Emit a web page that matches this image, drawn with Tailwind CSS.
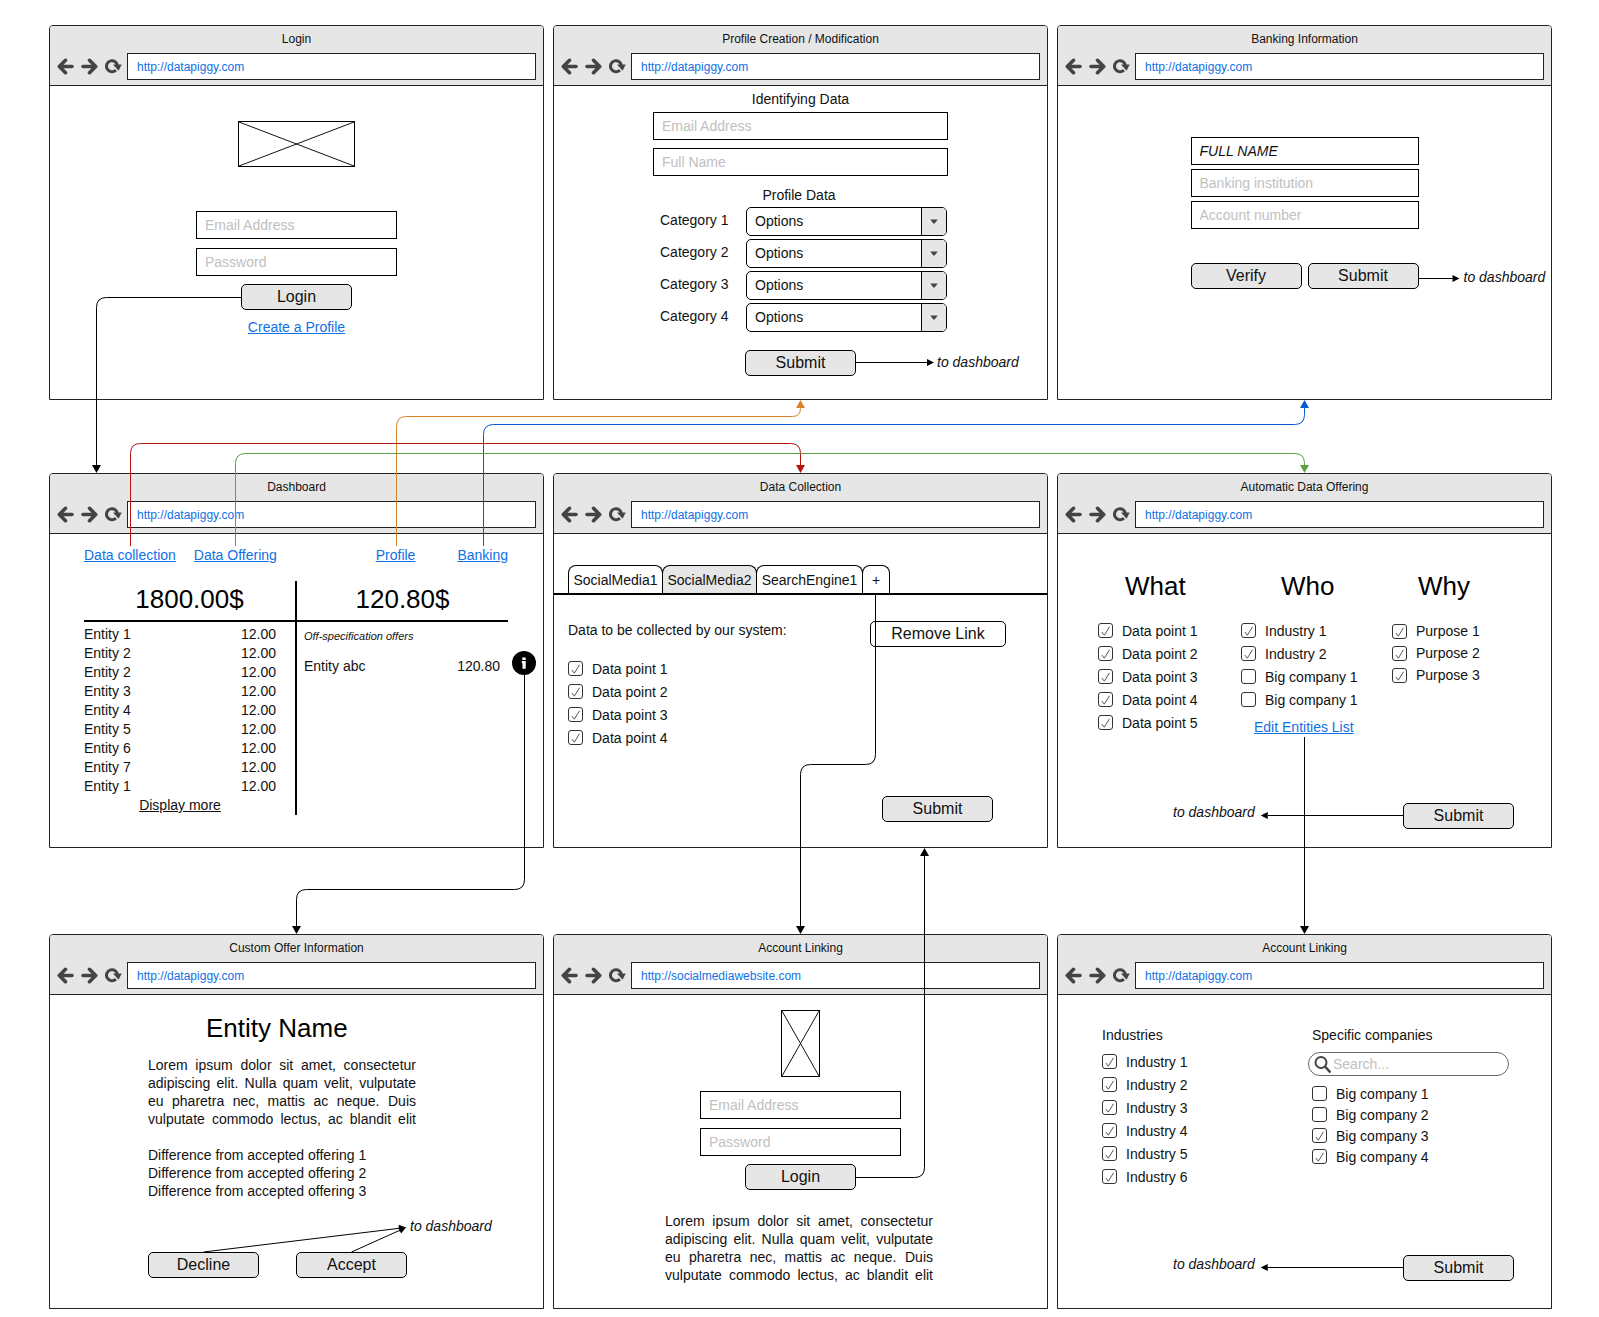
<!DOCTYPE html>
<html lang="en">
<head>
<meta charset="utf-8">
<meta name="viewport" content="width=device-width, initial-scale=1">
<title>Data Piggy wireframes</title>
<script src="https://cdn.jsdelivr.net/npm/@tailwindcss/browser@4"></script>
</head>
<body class="bg-white font-['Liberation_Sans',Arial,sans-serif] text-[14px] leading-[18px] text-[#111]">

<!-- Shared icons -->
<svg class="hidden" aria-hidden="true">
  <symbol id="back" viewBox="0 0 17 17"><path d="M8.5 2.3 2.3 8.5l6.2 6.2M3 8.5h12" fill="none" stroke="#444" stroke-width="3.6" stroke-linecap="round" stroke-linejoin="round"/></symbol>
  <symbol id="forward" viewBox="0 0 17 17"><path d="M8.5 2.3l6.2 6.2-6.2 6.2M14 8.5H2" fill="none" stroke="#444" stroke-width="3.6" stroke-linecap="round" stroke-linejoin="round"/></symbol>
  <symbol id="reload" viewBox="0 0 17 17"><path d="M12.5 8.2A5.5 5.5 0 1 0 10.9 12.1" fill="none" stroke="#444" stroke-width="3"/><path d="M8 6.4h8.7L13.6 12.8z" fill="#444"/></symbol>
  <symbol id="check" viewBox="0 0 15 15"><path d="M3.8 9l2.5 3.2L11.5 3.8" fill="none" stroke="#555"/></symbol>
  <symbol id="caret" viewBox="0 0 8 5"><path d="M.3.5h7.4L4.6 4.4H3.4z" fill="#444"/></symbol>
</svg>

<main class="relative grid min-w-[1500px] grid-cols-3 gap-x-[9px] pt-[25px] pr-[47px] pb-[8px] pl-[49px]
  [&_section]:min-h-[375px] [&_section]:rounded-t-[4px] [&_section]:border [&_section]:border-[#222]
  [&_header]:border-b [&_header]:border-[#222] [&_header]:bg-[#e6e6e6] [&_header]:rounded-t-[3px] [&_header]:pb-[5px] [&_header]:text-[12px]
  [&_header_h2]:text-center [&_header_h2]:leading-[27px]
  [&_header_div]:flex [&_header_div]:items-center [&_header_div]:gap-[7px] [&_header_div]:px-[7px]
  [&_header_svg]:size-[17px]
  [&_[type=url]]:-ml-[2px] [&_[type=url]]:h-[27px] [&_[type=url]]:min-w-0 [&_[type=url]]:flex-1 [&_[type=url]]:border [&_[type=url]]:border-[#222] [&_[type=url]]:bg-white [&_[type=url]]:px-[9px] [&_[type=url]]:text-[#1071e5]
  [&_.field]:h-[28px] [&_.field]:w-full [&_.field]:border [&_.field]:border-black [&_.field]:px-[8px] [&_.field]:placeholder:text-[#c0c0c0]
  [&_.btn]:h-[26px] [&_.btn]:w-[111px] [&_.btn]:shrink-0 [&_.btn]:rounded-[5px] [&_.btn]:border [&_.btn]:border-black [&_.btn]:bg-[#e6e6e6] [&_.btn]:text-[16px] [&_.btn]:leading-[24px]
  [&_.link]:text-[#1071e5] [&_.link]:underline
  [&_.title]:text-[26px] [&_.title]:leading-[34px] [&_.title]:text-black
  [&_li]:flex [&_li]:items-center [&_label]:whitespace-nowrap
  [&_.box]:mr-[9px] [&_.box]:grid [&_.box]:size-[15px] [&_.box]:shrink-0
  [&_.box_input]:col-start-1 [&_.box_input]:row-start-1 [&_.box_input]:size-[15px] [&_.box_input]:appearance-none [&_.box_input]:rounded-[3px] [&_.box_input]:border [&_.box_input]:border-[#333]
  [&_.box_svg]:pointer-events-none [&_.box_svg]:col-start-1 [&_.box_svg]:row-start-1 [&_.box_svg]:hidden [&_.box_svg]:size-[15px]">

  <!-- Login -->
  <section>
    <header>
      <h2>Login</h2>
      <div><button aria-label="Back"><svg><use href="#back"/></svg></button><button aria-label="Forward"><svg><use href="#forward"/></svg></button><button aria-label="Reload"><svg><use href="#reload"/></svg></button><input type="url" aria-label="Address" value="http://datapiggy.com"></div>
    </header>
    <form class="flex flex-col items-center pt-[35px]">
      <svg class="h-[46px] w-[117px] border border-black" viewBox="0 0 115 44" preserveAspectRatio="none" role="img" aria-label="Logo"><path d="M0 0l115 44M115 0L0 44" stroke="#111"/></svg>
      <div class="mt-[44px] flex w-[201px] flex-col gap-[9px]">
        <input class="field" aria-label="Email Address" placeholder="Email Address">
        <input class="field" type="password" aria-label="Password" placeholder="Password">
      </div>
      <button type="button" id="login" class="btn mt-[8px]">Login</button>
      <a href="#profile" class="link mt-[8px]">Create a Profile</a>
    </form>
  </section>

  <!-- Profile -->
  <section id="profile">
    <header>
      <h2>Profile Creation / Modification</h2>
      <div><button aria-label="Back"><svg><use href="#back"/></svg></button><button aria-label="Forward"><svg><use href="#forward"/></svg></button><button aria-label="Reload"><svg><use href="#reload"/></svg></button><input type="url" aria-label="Address" value="http://datapiggy.com"></div>
    </header>
    <form class="flex flex-col items-center pt-[4px]">
      <h3>Identifying Data</h3>
      <div class="mt-[4px] flex w-[295px] flex-col gap-[8px]">
        <input class="field" aria-label="Email Address" placeholder="Email Address">
        <input class="field" aria-label="Full Name" placeholder="Full Name">
      </div>
      <h3 class="mt-[10px] pr-[3px]">Profile Data</h3>
      <div class="mt-[3px] grid w-[295px] grid-cols-[86px_201px] gap-y-[3px] pl-[7px]
        [&_label]:leading-[26px]
        [&_.pick]:grid [&_.pick]:h-[29px] [&_.pick]:grid-cols-[1fr_25px] [&_.pick]:overflow-hidden [&_.pick]:rounded-[5px] [&_.pick]:border [&_.pick]:border-black
        [&_select]:col-span-2 [&_select]:col-start-1 [&_select]:row-start-1 [&_select]:appearance-none [&_select]:px-[8px] [&_select]:pb-[2px]
        [&_.pick_span]:pointer-events-none [&_.pick_span]:col-start-2 [&_.pick_span]:row-start-1 [&_.pick_span]:grid [&_.pick_span]:place-items-center [&_.pick_span]:border-l [&_.pick_span]:border-black [&_.pick_span]:bg-[#e6e6e6]">
        <label for="c1">Category 1</label>
        <div class="pick"><select id="c1"><option>Options</option></select><span><svg class="h-[5px] w-[8px]"><use href="#caret"/></svg></span></div>
        <label for="c2">Category 2</label>
        <div class="pick"><select id="c2"><option>Options</option></select><span><svg class="h-[5px] w-[8px]"><use href="#caret"/></svg></span></div>
        <label for="c3">Category 3</label>
        <div class="pick"><select id="c3"><option>Options</option></select><span><svg class="h-[5px] w-[8px]"><use href="#caret"/></svg></span></div>
        <label for="c4">Category 4</label>
        <div class="pick"><select id="c4"><option>Options</option></select><span><svg class="h-[5px] w-[8px]"><use href="#caret"/></svg></span></div>
      </div>
      <div class="mt-[18px] grid w-full grid-cols-[1fr_auto_1fr] items-center">
        <button type="button" id="profile-submit" class="btn col-start-2">Submit</button>
        <p class="pb-[2px] pl-[81px] italic"><span id="profile-note">to dashboard</span></p>
      </div>
    </form>
  </section>

  <!-- Banking -->
  <section id="banking">
    <header>
      <h2>Banking Information</h2>
      <div><button aria-label="Back"><svg><use href="#back"/></svg></button><button aria-label="Forward"><svg><use href="#forward"/></svg></button><button aria-label="Reload"><svg><use href="#reload"/></svg></button><input type="url" aria-label="Address" value="http://datapiggy.com"></div>
    </header>
    <form class="flex flex-col items-center pt-[51px]">
      <div class="flex w-[228px] flex-col gap-[4px]">
        <input class="field italic" aria-label="Full name" value="FULL NAME">
        <input class="field" aria-label="Banking institution" placeholder="Banking institution">
        <input class="field" aria-label="Account number" placeholder="Account number">
      </div>
      <div class="mt-[34px] grid w-full grid-cols-[1fr_auto_1fr] items-center">
        <div class="col-start-2 flex gap-[6px]">
          <button type="button" class="btn">Verify</button>
          <button type="button" id="banking-submit" class="btn">Submit</button>
        </div>
        <p class="pt-[2px] pl-[45px] italic"><span id="banking-note">to dashboard</span></p>
      </div>
    </form>
  </section>

  <!-- Dashboard -->
  <section id="dashboard" class="mt-[73px]">
    <header>
      <h2>Dashboard</h2>
      <div><button aria-label="Back"><svg><use href="#back"/></svg></button><button aria-label="Forward"><svg><use href="#forward"/></svg></button><button aria-label="Reload"><svg><use href="#reload"/></svg></button><input type="url" aria-label="Address" value="http://datapiggy.com"></div>
    </header>
    <div class="pt-[12px] pr-[35px] pl-[34px]">
      <nav class="flex">
        <a id="nav-collection" href="#collection" class="link">Data collection</a>
        <a id="nav-offering" href="#offering" class="link ml-[18px]">Data Offering</a>
        <a id="nav-profile" href="#profile" class="link ml-auto">Profile</a>
        <a id="nav-banking" href="#banking" class="link ml-[42px]">Banking</a>
      </nav>
      <div class="mt-[17px] grid grid-cols-[1fr_2px_1fr]">
        <div>
          <h3 class="title border-b-2 border-black pt-px pb-[4px] text-center">1800.00$</h3>
          <div class="pt-[3px] pr-[19px] text-center leading-[19px]">
            <table class="w-full [&_td]:p-0 [&_td]:text-right [&_th]:p-0 [&_th]:text-left [&_th]:font-normal">
              <tr><th>Entity 1</th><td>12.00</td></tr>
              <tr><th>Entity 2</th><td>12.00</td></tr>
              <tr><th>Entity 2</th><td>12.00</td></tr>
              <tr><th>Entity 3</th><td>12.00</td></tr>
              <tr><th>Entity 4</th><td>12.00</td></tr>
              <tr><th>Entity 5</th><td>12.00</td></tr>
              <tr><th>Entity 6</th><td>12.00</td></tr>
              <tr><th>Entity 7</th><td>12.00</td></tr>
              <tr><th>Entity 1</th><td>12.00</td></tr>
            </table>
            <a href="#dashboard" class="underline">Display more</a>
          </div>
        </div>
        <div class="bg-black"></div>
        <div>
          <h3 class="title border-b-2 border-black pt-px pb-[4px] text-center">120.80$</h3>
          <p class="pt-[5px] pl-[7px] text-[11px] italic">Off-specification offers</p>
          <div class="mt-[6px] -mr-[28px] flex items-end pl-[7px]">
            <span>Entity abc</span>
            <span class="ml-auto">120.80</span>
            <button id="info" class="ml-[12px] size-[24px]" aria-label="Offer information">
              <svg viewBox="0 0 24 24"><circle cx="12" cy="12" r="12"/><path d="M10.3 6.5h3.4v2.4h-3.4zM9.8 10.1h3.9v7.7h-3.2v-5.6h-.7z" fill="#fff"/></svg>
            </button>
          </div>
        </div>
      </div>
    </div>
  </section>

  <!-- Data collection -->
  <section id="collection" class="mt-[73px]">
    <header>
      <h2>Data Collection</h2>
      <div><button aria-label="Back"><svg><use href="#back"/></svg></button><button aria-label="Forward"><svg><use href="#forward"/></svg></button><button aria-label="Reload"><svg><use href="#reload"/></svg></button><input type="url" aria-label="Address" value="http://datapiggy.com"></div>
    </header>
    <nav class="flex items-end border-b-2 border-black pt-[31px] pl-[14px] [&_button]:h-[28px] [&_button]:rounded-t-[8px] [&_button]:border [&_button]:border-b-0 [&_button]:border-black">
      <button class="w-[95px]">SocialMedia1</button>
      <button class="-ml-px w-[95px] bg-[#e6e6e6]">SocialMedia2</button>
      <button class="-ml-px w-[107px]">SearchEngine1</button>
      <button id="add-tab" class="-ml-px w-[28px]">+</button>
    </nav>
    <div class="pt-[26px] pr-[41px] pl-[14px]">
      <div class="flex items-start justify-between">
        <p>Data to be collected by our system:</p>
        <button class="h-[26px] w-[136px] rounded-[5px] border border-black text-[16px] leading-[24px]">Remove Link</button>
      </div>
      <ul class="mt-[10px] [&_li]:h-[23px]">
        <li><span class="box"><input type="checkbox" id="d1" class="peer" checked><svg class="peer-checked:block!"><use href="#check"/></svg></span><label for="d1">Data point 1</label></li>
        <li><span class="box"><input type="checkbox" id="d2" class="peer" checked><svg class="peer-checked:block!"><use href="#check"/></svg></span><label for="d2">Data point 2</label></li>
        <li><span class="box"><input type="checkbox" id="d3" class="peer" checked><svg class="peer-checked:block!"><use href="#check"/></svg></span><label for="d3">Data point 3</label></li>
        <li><span class="box"><input type="checkbox" id="d4" class="peer" checked><svg class="peer-checked:block!"><use href="#check"/></svg></span><label for="d4">Data point 4</label></li>
      </ul>
      <div class="mt-[47px] flex justify-end pr-[13px]"><button class="btn">Submit</button></div>
    </div>
  </section>

  <!-- Automatic data offering -->
  <section id="offering" class="mt-[73px]">
    <header>
      <h2>Automatic Data Offering</h2>
      <div><button aria-label="Back"><svg><use href="#back"/></svg></button><button aria-label="Forward"><svg><use href="#forward"/></svg></button><button aria-label="Reload"><svg><use href="#reload"/></svg></button><input type="url" aria-label="Address" value="http://datapiggy.com"></div>
    </header>
    <div class="grid grid-cols-[143px_151px_1fr] pt-[35px] pl-[40px]">
      <div>
        <h3 class="title pl-[27px]">What</h3>
        <ul class="mt-[16px] [&_li]:h-[23px]">
          <li><span class="box"><input type="checkbox" id="w1" class="peer" checked><svg class="peer-checked:block!"><use href="#check"/></svg></span><label for="w1">Data point 1</label></li>
          <li><span class="box"><input type="checkbox" id="w2" class="peer" checked><svg class="peer-checked:block!"><use href="#check"/></svg></span><label for="w2">Data point 2</label></li>
          <li><span class="box"><input type="checkbox" id="w3" class="peer" checked><svg class="peer-checked:block!"><use href="#check"/></svg></span><label for="w3">Data point 3</label></li>
          <li><span class="box"><input type="checkbox" id="w4" class="peer" checked><svg class="peer-checked:block!"><use href="#check"/></svg></span><label for="w4">Data point 4</label></li>
          <li><span class="box"><input type="checkbox" id="w5" class="peer" checked><svg class="peer-checked:block!"><use href="#check"/></svg></span><label for="w5">Data point 5</label></li>
        </ul>
      </div>
      <div>
        <h3 class="title pl-[40px]">Who</h3>
        <ul class="mt-[16px] [&_li]:h-[23px]">
          <li><span class="box"><input type="checkbox" id="h1" class="peer" checked><svg class="peer-checked:block!"><use href="#check"/></svg></span><label for="h1">Industry 1</label></li>
          <li><span class="box"><input type="checkbox" id="h2" class="peer" checked><svg class="peer-checked:block!"><use href="#check"/></svg></span><label for="h2">Industry 2</label></li>
          <li><span class="box"><input type="checkbox" id="h3" class="peer"><svg class="peer-checked:block!"><use href="#check"/></svg></span><label for="h3">Big company 1</label></li>
          <li><span class="box"><input type="checkbox" id="h4" class="peer"><svg class="peer-checked:block!"><use href="#check"/></svg></span><label for="h4">Big company 1</label></li>
        </ul>
        <p class="mt-[7px] pl-[13px]"><a id="edit-entities" href="#linking" class="link">Edit Entities List</a></p>
      </div>
      <div>
        <h3 class="title pl-[26px]">Why</h3>
        <ul class="mt-[17px] [&_li]:h-[22px]">
          <li><span class="box"><input type="checkbox" id="y1" class="peer" checked><svg class="peer-checked:block!"><use href="#check"/></svg></span><label for="y1">Purpose 1</label></li>
          <li><span class="box"><input type="checkbox" id="y2" class="peer" checked><svg class="peer-checked:block!"><use href="#check"/></svg></span><label for="y2">Purpose 2</label></li>
          <li><span class="box"><input type="checkbox" id="y3" class="peer" checked><svg class="peer-checked:block!"><use href="#check"/></svg></span><label for="y3">Purpose 3</label></li>
        </ul>
      </div>
    </div>
    <div class="mt-[67px] flex items-start justify-between pr-[37px] pl-[115px]">
      <p id="offering-note" class="italic">to dashboard</p>
      <button id="offering-submit" class="btn">Submit</button>
    </div>
  </section>

  <!-- Custom offer -->
  <section id="offer" class="mt-[86px]">
    <header>
      <h2>Custom Offer Information</h2>
      <div><button aria-label="Back"><svg><use href="#back"/></svg></button><button aria-label="Forward"><svg><use href="#forward"/></svg></button><button aria-label="Reload"><svg><use href="#reload"/></svg></button><input type="url" aria-label="Address" value="http://datapiggy.com"></div>
    </header>
    <div class="pt-[16px] pl-[98px]">
      <h3 class="title pl-[58px]">Entity Name</h3>
      <p class="mt-[11px] w-[268px] text-justify [text-align-last:justify]">Lorem ipsum dolor sit amet, consectetur adipiscing elit. Nulla quam velit, vulputate eu pharetra nec, mattis ac neque. Duis vulputate commodo lectus, ac blandit elit</p>
      <div class="mt-[18px]">
        <p>Difference from accepted offering 1</p>
        <p>Difference from accepted offering 2</p>
        <p>Difference from accepted offering 3</p>
      </div>
      <p class="mt-[17px] pl-[262px] italic"><span id="offer-note">to dashboard</span></p>
      <div class="mt-[17px] flex gap-[37px]">
        <button id="decline" class="btn">Decline</button>
        <button id="accept" class="btn">Accept</button>
      </div>
    </div>
  </section>

  <!-- Account linking: social media login -->
  <section id="social" class="mt-[86px]">
    <header>
      <h2>Account Linking</h2>
      <div><button aria-label="Back"><svg><use href="#back"/></svg></button><button aria-label="Forward"><svg><use href="#forward"/></svg></button><button aria-label="Reload"><svg><use href="#reload"/></svg></button><input type="url" aria-label="Address" value="http://socialmediawebsite.com"></div>
    </header>
    <form class="flex flex-col items-center pt-[15px]">
      <svg class="h-[67px] w-[39px] border border-black" viewBox="0 0 37 65" preserveAspectRatio="none" role="img" aria-label="Logo"><path d="M0 0l37 65M37 0L0 65" stroke="#111"/></svg>
      <div class="mt-[14px] flex w-[201px] flex-col gap-[9px]">
        <input class="field" aria-label="Email Address" placeholder="Email Address">
        <input class="field" type="password" aria-label="Password" placeholder="Password">
      </div>
      <button type="button" id="social-login" class="btn mt-[8px]">Login</button>
      <p class="mt-[22px] w-[271px] pr-[3px] text-justify [text-align-last:justify]">Lorem ipsum dolor sit amet, consectetur adipiscing elit. Nulla quam velit, vulputate eu pharetra nec, mattis ac neque. Duis vulputate commodo lectus, ac blandit elit</p>
    </form>
  </section>

  <!-- Account linking: entities -->
  <section id="linking" class="mt-[86px]">
    <header>
      <h2>Account Linking</h2>
      <div><button aria-label="Back"><svg><use href="#back"/></svg></button><button aria-label="Forward"><svg><use href="#forward"/></svg></button><button aria-label="Reload"><svg><use href="#reload"/></svg></button><input type="url" aria-label="Address" value="http://datapiggy.com"></div>
    </header>
    <div class="grid grid-cols-[206px_201px] pt-[31px] pl-[44px]">
      <div>
        <h3>Industries</h3>
        <ul class="mt-[6px] [&_li]:h-[23px]">
          <li><span class="box"><input type="checkbox" id="i1" class="peer" checked><svg class="peer-checked:block!"><use href="#check"/></svg></span><label for="i1">Industry 1</label></li>
          <li><span class="box"><input type="checkbox" id="i2" class="peer" checked><svg class="peer-checked:block!"><use href="#check"/></svg></span><label for="i2">Industry 2</label></li>
          <li><span class="box"><input type="checkbox" id="i3" class="peer" checked><svg class="peer-checked:block!"><use href="#check"/></svg></span><label for="i3">Industry 3</label></li>
          <li><span class="box"><input type="checkbox" id="i4" class="peer" checked><svg class="peer-checked:block!"><use href="#check"/></svg></span><label for="i4">Industry 4</label></li>
          <li><span class="box"><input type="checkbox" id="i5" class="peer" checked><svg class="peer-checked:block!"><use href="#check"/></svg></span><label for="i5">Industry 5</label></li>
          <li><span class="box"><input type="checkbox" id="i6" class="peer" checked><svg class="peer-checked:block!"><use href="#check"/></svg></span><label for="i6">Industry 6</label></li>
        </ul>
      </div>
      <div>
        <h3 class="pl-[4px]">Specific companies</h3>
        <div class="mt-[8px] flex h-[24px] items-center gap-[2px] rounded-full border border-[#666] pr-[12px] pl-[5px]">
          <svg class="size-[17px] shrink-0" viewBox="0 0 17 17" fill="none" stroke="#444"><circle cx="7" cy="6.5" r="5.5" stroke-width="2"/><path d="M11 10.5l5.5 6" stroke-width="2.5"/></svg>
          <input type="search" class="min-w-0 flex-1 placeholder:text-[#c0c0c0]" aria-label="Search companies" placeholder="Search...">
        </div>
        <ul class="mt-[7px] pl-[4px] [&_li]:h-[21px]">
          <li><span class="box"><input type="checkbox" id="b1" class="peer"><svg class="peer-checked:block!"><use href="#check"/></svg></span><label for="b1">Big company 1</label></li>
          <li><span class="box"><input type="checkbox" id="b2" class="peer"><svg class="peer-checked:block!"><use href="#check"/></svg></span><label for="b2">Big company 2</label></li>
          <li><span class="box"><input type="checkbox" id="b3" class="peer" checked><svg class="peer-checked:block!"><use href="#check"/></svg></span><label for="b3">Big company 3</label></li>
          <li><span class="box"><input type="checkbox" id="b4" class="peer" checked><svg class="peer-checked:block!"><use href="#check"/></svg></span><label for="b4">Big company 4</label></li>
        </ul>
      </div>
    </div>
    <div class="mt-[67px] flex items-start justify-between pr-[37px] pl-[115px]">
      <p id="linking-note" class="italic">to dashboard</p>
      <button id="linking-submit" class="btn">Submit</button>
    </div>
  </section>

  <!-- Connectors between the screens, drawn over everything -->
  <svg id="wires" class="pointer-events-none absolute inset-0 size-full" fill="none" aria-hidden="true"></svg>
</main>

<script>
  const wires = document.getElementById('wires');

  // Edges and centre lines of an element, in the overlay's coordinates
  function at(id) {
    const r = document.getElementById(id).getBoundingClientRect();
    const o = wires.getBoundingClientRect();
    const left = r.left - o.left, top = r.top - o.top;
    const mid = v => Math.ceil(v - 0.5) + 0.5;
    return { left, top, right: left + r.width, bottom: top + r.height,
      cx: mid(left + r.width / 2), cy: mid(top + r.height / 2) };
  }

  // A line through the points, rounded at its corners, with an arrowhead at the end
  function wire(color, points, head = 8, half = 4.5) {
    const n = points.length;
    const [tx, ty] = points[n - 1], [px, py] = points[n - 2];
    const len = Math.hypot(tx - px, ty - py), ux = (tx - px) / len, uy = (ty - py) / len;
    const bx = tx - ux * head, by = ty - uy * head;
    let d = `M${points[0]}`;
    for (let i = 1; i < n - 1; i++) {
      const p = points[i], a = points[i - 1], b = points[i + 1];
      const la = Math.hypot(a[0] - p[0], a[1] - p[1]), lb = Math.hypot(b[0] - p[0], b[1] - p[1]);
      const r = Math.min(10, la / 2, lb / 2);
      d += `L${p[0] + (a[0] - p[0]) / la * r} ${p[1] + (a[1] - p[1]) / la * r}`;
      d += `Q${p} ${p[0] + (b[0] - p[0]) / lb * r} ${p[1] + (b[1] - p[1]) / lb * r}`;
    }
    d += `L${bx} ${by}`;
    return `<path d="${d}" stroke="${color}"/>` +
      `<path d="M${tx} ${ty}L${bx - uy * half} ${by + ux * half}L${bx + uy * half} ${by - ux * half}z" fill="${color}"/>`;
  }

  function draw() {
    const dash = at('dashboard'), coll = at('collection'), off = at('offering');
    const prof = at('profile'), bank = at('banking');
    const login = at('login'), info = at('info'), offer = at('offer');
    const tab = at('add-tab'), social = at('social'), sl = at('social-login');
    const edit = at('edit-entities'), linking = at('linking');
    const n1 = at('nav-collection'), n2 = at('nav-offering'), n3 = at('nav-profile'), n4 = at('nav-banking');
    const dx = dash.left + 47.5, up = coll.left + 371.5, tx = tab.cx - 1;
    const red = dash.top - 29.5, green = dash.top - 19.5, orange = prof.bottom + 16.5, blue = prof.bottom + 24.5;
    const mid = offer.top - 44.5, drop = tab.bottom + 171.5;
    const ps = at('profile-submit'), pn = at('profile-note'), bs = at('banking-submit'), bn = at('banking-note');
    const os = at('offering-submit'), on = at('offering-note'), ls = at('linking-submit'), ln = at('linking-note');
    const dec = at('decline'), acc = at('accept'), note = at('offer-note');
    wires.innerHTML = [
      wire('#000', [[login.left, login.cy], [dx, login.cy], [dx, dash.top]]),
      wire('#d6842a', [[n3.cx, n3.top], [n3.cx, orange], [prof.cx, orange], [prof.cx, prof.bottom]]),
      wire('#0b57d0', [[n4.cx, n4.top], [n4.cx, blue], [bank.cx, blue], [bank.cx, bank.bottom]]),
      wire('#b5130b', [[n1.cx, n1.top], [n1.cx, red], [coll.cx, red], [coll.cx, coll.top]]),
      wire('#60a042', [[n2.cx, n2.top], [n2.cx, green], [off.cx, green], [off.cx, off.top]]),
      wire('#000', [[info.cx, info.bottom], [info.cx, mid], [offer.cx, mid], [offer.cx, offer.top]]),
      wire('#000', [[tx, tab.bottom], [tx, drop], [social.cx, drop], [social.cx, social.top]]),
      wire('#000', [[sl.right, sl.cy], [up, sl.cy], [up, coll.bottom]]),
      wire('#000', [[linking.cx, edit.bottom + 2], [linking.cx, linking.top]]),
      wire('#000', [[ps.right, ps.cy - 1], [pn.left - 3, ps.cy - 1]], 7, 3.5),
      wire('#000', [[bs.right, bs.cy + 2], [bn.left - 4, bs.cy + 2]], 7, 3.5),
      wire('#000', [[os.left, os.cy - 1], [on.right + 6, os.cy - 1]], 7, 3.5),
      wire('#000', [[ls.left, ls.cy - 1], [ln.right + 6, ls.cy - 1]], 7, 3.5),
      wire('#000', [[dec.cx, dec.top], [note.left - 4, note.cy + 1]], 7, 3.5),
      wire('#000', [[acc.cx, acc.top], [note.left - 4, note.cy + 1]], 7, 3.5)
    ].join('');
  }

  draw();
  addEventListener('load', draw);
  addEventListener('resize', draw);
</script>
</body>
</html>
